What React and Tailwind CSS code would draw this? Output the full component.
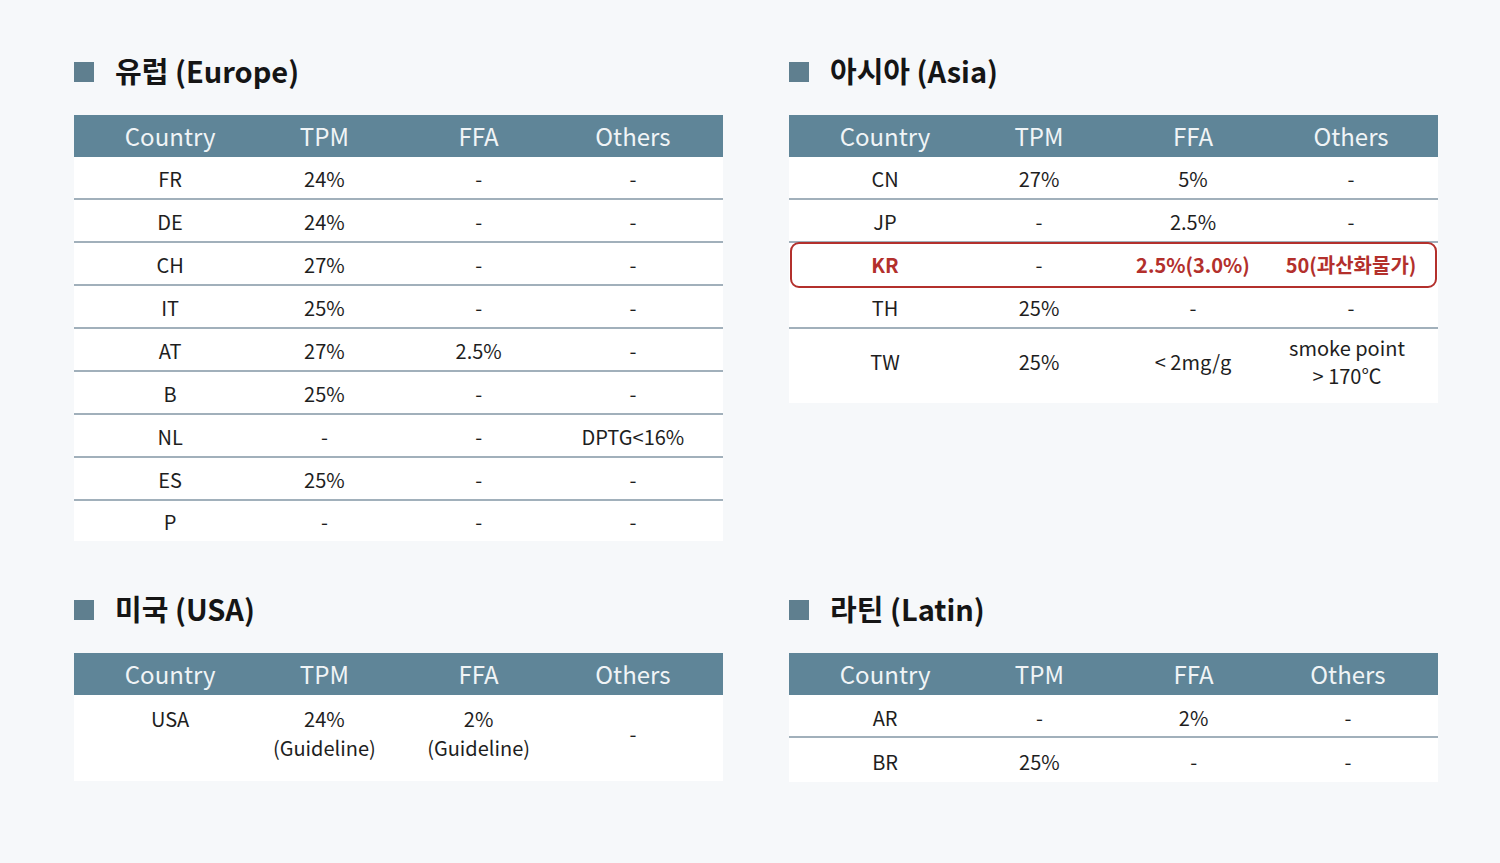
const HEAD = ["Country", "TPM", "FFA", "Others"];

const europe = [
  ["FR", "24%", "-", "-"],
  ["DE", "24%", "-", "-"],
  ["CH", "27%", "-", "-"],
  ["IT", "25%", "-", "-"],
  ["AT", "27%", "2.5%", "-"],
  ["B", "25%", "-", "-"],
  ["NL", "-", "-", "DPTG<16%"],
  ["ES", "25%", "-", "-"],
  ["P", "-", "-", "-"],
];

const latin = [
  ["AR", "-", "2%", "-"],
  ["BR", "25%", "-", "-"],
];

const STD = "grid-cols-4 pl-[19px] pr-[13px]";
const ASIA = "grid-cols-[154px_154px_154px_1fr] pl-[19px] pr-[6px]";

function Title({ children }) {
  return (
    <div className="flex h-[40px] items-center gap-[21px]">
      <span className="h-[20px] w-[20px] bg-[#5f7f8f]" />
      <h2 className="pb-[4px] text-[29px] font-bold leading-none text-[#151515]">{children}</h2>
    </div>
  );
}

function Header({ cols = STD }) {
  return (
    <div className={"grid h-[42px] items-center bg-[#5f8598] text-center text-[24px] text-[#f0f4f6] " + cols}>
      {HEAD.map((h) => (
        <span key={h}>{h}</span>
      ))}
    </div>
  );
}

function Row({ cells, last, cols = STD, tall }) {
  return (
    <div
      className={
        "grid items-center text-center text-[20px] text-[#1e1e1e] " +
        cols +
        (tall ? " pt-[4px]" : " pt-[2px]") +
        (last ? (tall ? " h-[44px]" : " h-[40px]") : " h-[43px] border-b-2 border-[#a1b0bb]")
      }
    >
      {cells.map((c, i) => (
        <span key={i}>{c}</span>
      ))}
    </div>
  );
}

function Table({ rows, tall }) {
  return (
    <div className="mt-[23px] bg-white">
      <Header />
      {rows.map((r, i) => (
        <Row key={r[0]} cells={r} tall={tall} last={i === rows.length - 1} />
      ))}
    </div>
  );
}

function AsiaTable() {
  return (
    <div className="mt-[23px] bg-white">
      <Header cols={ASIA} />
      <Row cols={ASIA} cells={["CN", "27%", "5%", "-"]} />
      <Row cols={ASIA} cells={["JP", "-", "2.5%", "-"]} />
      <div className={"relative grid h-[43px] items-center text-center text-[20px] " + ASIA}>
        <span className="font-bold text-[#b3302c]">KR</span>
        <span className="text-[#1e1e1e]">-</span>
        <span className="font-bold text-[#b3302c]">2.5%(3.0%)</span>
        <span className="font-bold text-[#b3302c]">50(과산화물가)</span>
        <span className="absolute inset-x-[1px] -top-[1px] -bottom-[2px] rounded-[9px] border-2 border-[#b3302c]" />
      </div>
      <Row cols={ASIA} cells={["TH", "25%", "-", "-"]} />
      <div className={"grid items-center pt-[5px] pb-[13px] text-center text-[20px] leading-[28px] text-[#1e1e1e] " + ASIA}>
        <span>TW</span>
        <span>25%</span>
        <span>&lt; 2mg/g</span>
        <span className="pr-[8px]">
          smoke point
          <br />
          &gt; 170℃
        </span>
      </div>
    </div>
  );
}

function UsaTable() {
  return (
    <div className="mt-[23px] bg-white">
      <Header />
      <div className={"grid items-start pt-[9px] pb-[19px] text-center text-[20px] leading-[29px] text-[#1e1e1e] " + STD}>
        <span>USA</span>
        <span>
          24%
          <br />
          (Guideline)
        </span>
        <span>
          2%
          <br />
          (Guideline)
        </span>
        <span className="self-center">-</span>
      </div>
    </div>
  );
}

export default function App() {
  return (
    <div
      className="min-h-[863px] w-[1500px] bg-[#f6f8fa] pt-[52px] pl-[74px]"
      style={{ fontFamily: '"Noto Sans CJK KR", "Noto Sans", sans-serif' }}
    >
      <div className="grid grid-cols-[649px_649px] items-start gap-x-[66px] gap-y-[49px]">
        <section>
          <Title>유럽 (Europe)</Title>
          <Table rows={europe} />
        </section>
        <section>
          <Title>아시아 (Asia)</Title>
          <AsiaTable />
        </section>
        <section>
          <Title>미국 (USA)</Title>
          <UsaTable />
        </section>
        <section>
          <Title>라틴 (Latin)</Title>
          <Table rows={latin} tall />
        </section>
      </div>
    </div>
  );
}
